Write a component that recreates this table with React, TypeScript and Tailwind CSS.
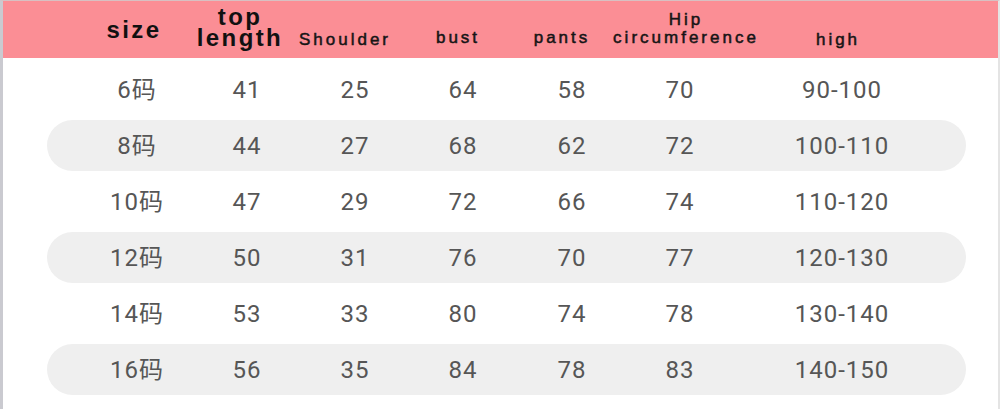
import React from 'react'

type Row = {
  size: string
  top: number
  shoulder: number
  bust: number
  pants: number
  hip: number
  high: string
}

const rows: Row[] = [
  { size: '6码', top: 41, shoulder: 25, bust: 64, pants: 58, hip: 70, high: '90-100' },
  { size: '8码', top: 44, shoulder: 27, bust: 68, pants: 62, hip: 72, high: '100-110' },
  { size: '10码', top: 47, shoulder: 29, bust: 72, pants: 66, hip: 74, high: '110-120' },
  { size: '12码', top: 50, shoulder: 31, bust: 76, pants: 70, hip: 77, high: '120-130' },
  { size: '14码', top: 53, shoulder: 33, bust: 80, pants: 74, hip: 78, high: '130-140' },
  { size: '16码', top: 56, shoulder: 35, bust: 84, pants: 78, hip: 83, high: '140-150' },
]

// column widths chosen so each cell's centre lines up with the header above
const colClass =
  'grid grid-cols-[110px_110px_106px_110px_108px_108px_216px] pl-[35px]'

const headBold =
  "font-['Liberation_Sans',Arial,sans-serif] font-bold text-[24px] tracking-[2.4px] leading-[21px] text-[#111]"
const headThin =
  "font-['Liberation_Sans',Arial,sans-serif] text-[17px] tracking-[3px] leading-[16px] text-[#151515] [-webkit-text-stroke:0.5px_#151515]"

export default function App() {
  return (
    <div className="w-[1000px] h-[409px] overflow-hidden bg-white">
      <div className="h-full border-l-[3px] border-t border-r-[2px] border-[#cacad0] border-r-[#e4e4e4] border-t-[#d8c0c2] flex flex-col">
        {/* header band */}
        <div className="h-[57px] bg-[#fb8e95] grid grid-cols-[81px_100px_112px_98px_128px_80px_168px_136px]">
          <div />
          <div className="flex items-end justify-center pb-[18px]">
            <span className={headBold}>size</span>
          </div>
          <div className="flex flex-col items-center justify-end pb-[10px]">
            <span className={headBold}>top</span>
            <span className={headBold}>length</span>
          </div>
          <div className="flex items-end justify-center pb-[10px]">
            <span className={headThin}>Shoulder</span>
          </div>
          <div className="flex items-end justify-center pb-[12px]">
            <span className={headThin}>bust</span>
          </div>
          <div className="flex items-end justify-center pb-[12px]">
            <span className={headThin}>pants</span>
          </div>
          <div className="flex flex-col items-center justify-end pb-[12px] gap-[2px]">
            <span className={headThin}>Hip</span>
            <span className={headThin}>circumference</span>
          </div>
          <div className="flex items-end justify-center pb-[10px]">
            <span className={headThin}>high</span>
          </div>
        </div>

        {/* size rows */}
        <div className="mt-[6px] pl-[44px] pr-[32px] flex flex-col gap-[5px]">
          {rows.map((r, i) => (
            <div
              key={r.size}
              className={`${colClass} h-[51px] items-center rounded-full ${
                i % 2 === 1 ? 'bg-[#efefef]' : 'bg-transparent'
              } font-['Roboto','Noto_Sans_CJK_SC',sans-serif] text-[24px] text-[#565656] tracking-[1px]`}
            >
              <span className="text-center">{r.size}</span>
              <span className="text-center">{r.top}</span>
              <span className="text-center">{r.shoulder}</span>
              <span className="text-center">{r.bust}</span>
              <span className="text-center">{r.pants}</span>
              <span className="text-center">{r.hip}</span>
              <span className="text-center">{r.high}</span>
            </div>
          ))}
        </div>
      </div>
    </div>
  )
}
